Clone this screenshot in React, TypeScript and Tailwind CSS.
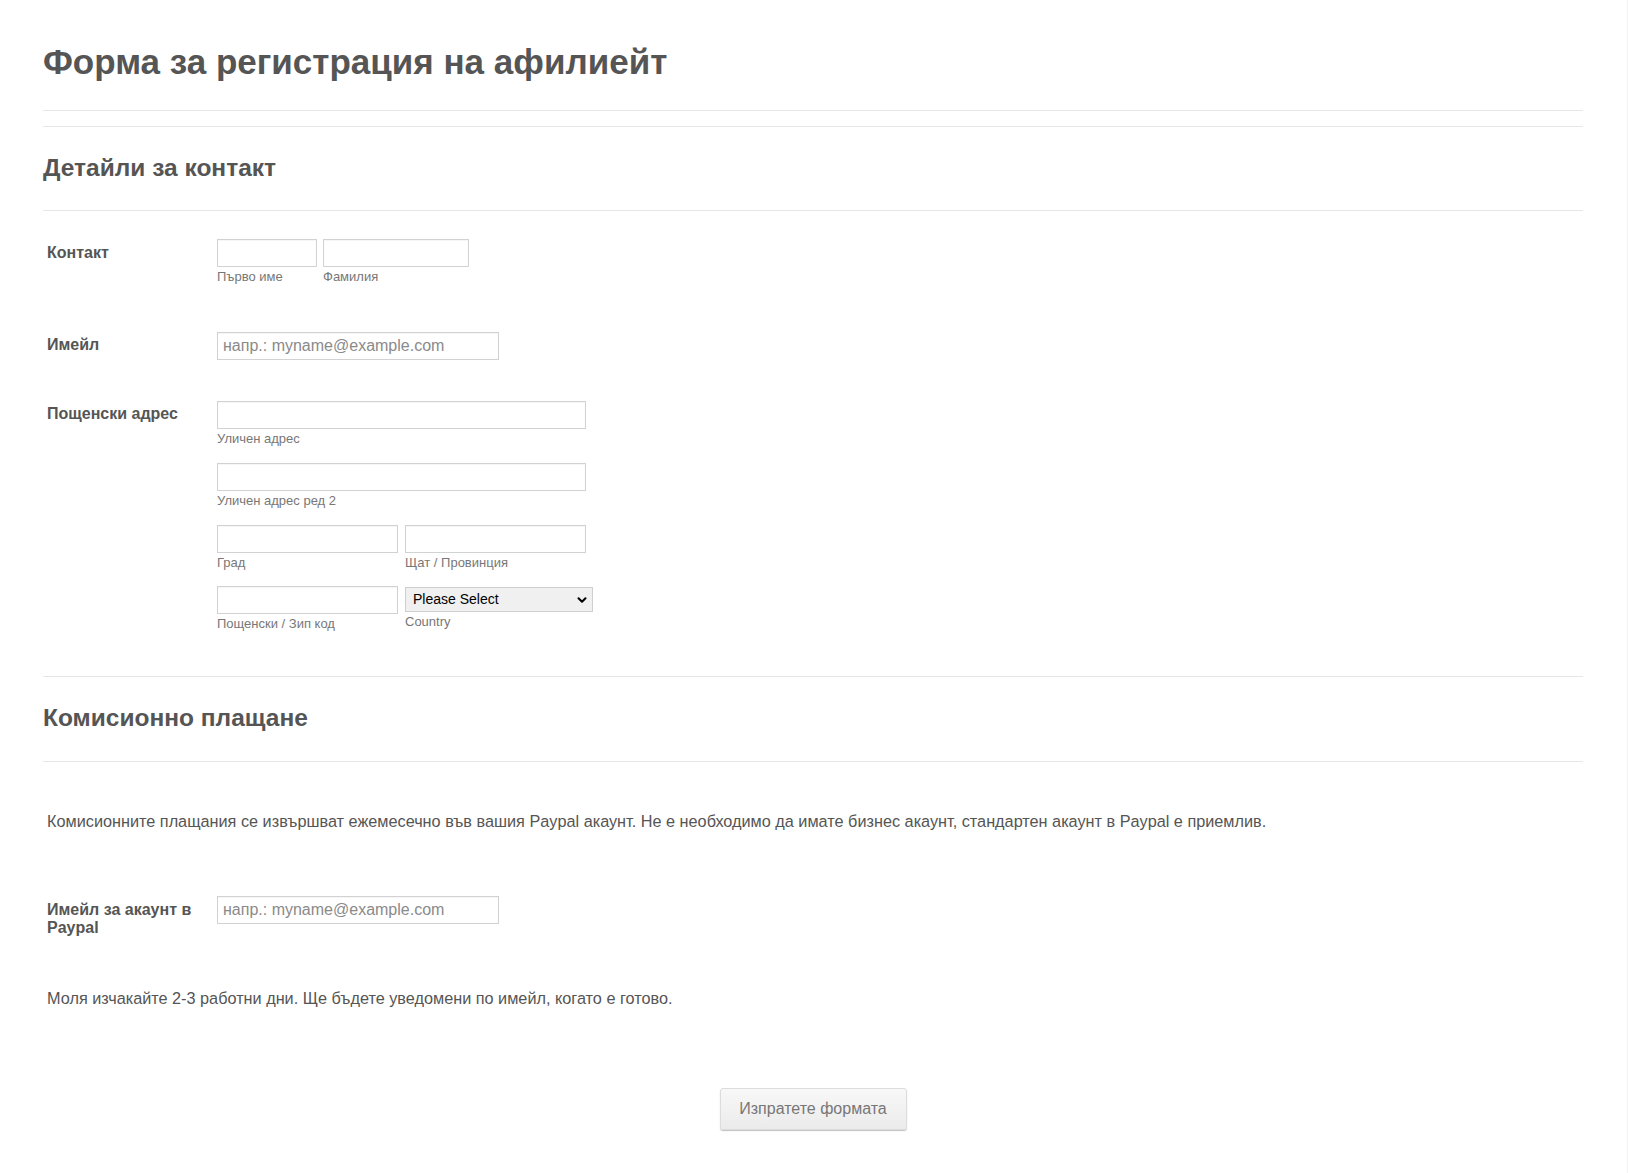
import { ChevronDown } from 'lucide-react'

const font = { fontFamily: '"Liberation Sans", Arial, sans-serif' }

function Sub({ children }: { children: React.ReactNode }) {
  return <div className="mt-[3px] text-[13px] leading-[14px] text-[#777]">{children}</div>
}

function TextBox({ width, placeholder }: { width: string; placeholder?: string }) {
  return (
    <input
      type="text"
      placeholder={placeholder}
      className={`${width} h-[28px] border border-[#d2d2d2] bg-white px-[5px] text-[16px] text-[#555] shadow-[inset_0_1px_1px_rgba(0,0,0,0.04)] outline-none placeholder:text-[#8a8a8a]`}
    />
  )
}

function Label({ children, top = 'pt-0' }: { children: React.ReactNode; top?: string }) {
  return (
    <div className={`w-[174px] shrink-0 pl-[4px] pr-[6px] text-[16px] font-bold leading-[18px] text-[#555] ${top}`}>
      {children}
    </div>
  )
}

export default function App() {
  return (
    <div className="min-h-[1173px] w-full border-r border-[#f2f2f2] bg-white px-[43px] pr-[44px] pt-[42px] pb-[43px]" style={font}>
      <h1 className="text-[35px] font-bold leading-[40px] text-[#555]">Форма за регистрация на афилиейт</h1>
      <div className="mt-[28px] border-t border-[#e6e6e6]" />
      <div className="mt-[15px] border-t border-[#e6e6e6]" />

      <h2 className="mt-[26px] text-[24.5px] font-bold leading-[30px] text-[#555]">Детайли за контакт</h2>
      <div className="mt-[27px] border-t border-[#e6e6e6]" />

      {/* Контакт */}
      <div className="mt-[28px] flex">
        <Label top="pt-[5px]">Контакт</Label>
        <div className="flex gap-[6px]">
          <div>
            <TextBox width="w-[100px]" />
            <Sub>Първо име</Sub>
          </div>
          <div>
            <TextBox width="w-[146px]" />
            <Sub>Фамилия</Sub>
          </div>
        </div>
      </div>

      {/* Имейл */}
      <div className="mt-[48px] flex">
        <Label top="pt-[4px]">Имейл</Label>
        <TextBox width="w-[282px]" placeholder="напр.: myname@example.com" />
      </div>

      {/* Пощенски адрес */}
      <div className="mt-[41px] flex">
        <Label top="pt-[4px]">Пощенски адрес</Label>
        <div className="flex w-[376px] flex-col">
          <div>
            <TextBox width="w-[369px]" />
            <Sub>Уличен адрес</Sub>
          </div>
          <div className="mt-[17px]">
            <TextBox width="w-[369px]" />
            <Sub>Уличен адрес ред 2</Sub>
          </div>
          <div className="mt-[17px] flex gap-[7px]">
            <div>
              <TextBox width="w-[181px]" />
              <Sub>Град</Sub>
            </div>
            <div>
              <TextBox width="w-[181px]" />
              <Sub>Щат / Провинция</Sub>
            </div>
          </div>
          <div className="mt-[16px] flex gap-[7px]">
            <div>
              <TextBox width="w-[181px]" />
              <Sub>Пощенски / Зип код</Sub>
            </div>
            <div>
              <div className="relative mt-[1px] h-[25px] w-[188px]">
                <select className="h-full w-full appearance-none border border-[#cfcfcf] bg-[#f0f0f0] pl-[7px] text-[14px] text-black outline-none">
                  <option>Please Select</option>
                </select>
                <ChevronDown className="pointer-events-none absolute right-[4px] top-[6px] h-[14px] w-[14px] text-black" strokeWidth={3.5} />
              </div>
              <Sub>Country</Sub>
            </div>
          </div>
        </div>
      </div>

      <div className="mt-[45px] border-t border-[#e6e6e6]" />
      <h2 className="mt-[26px] text-[24.5px] font-bold leading-[30px] text-[#555]">Комисионно плащане</h2>
      <div className="mt-[28px] border-t border-[#e6e6e6]" />

      <p className="mt-[49px] pl-[4px] text-[16.25px] leading-[20px] text-[#555]">
        Комисионните плащания се извършват ежемесечно във вашия Paypal акаунт. Не е необходимо да имате бизнес акаунт, стандартен акаунт в Paypal е приемлив.
      </p>

      {/* Paypal */}
      <div className="mt-[65px] flex">
        <Label top="pt-[5px]">Имейл за акаунт в Paypal</Label>
        <TextBox width="w-[282px]" placeholder="напр.: myname@example.com" />
      </div>

      <p className="mt-[51px] pl-[4px] text-[16.25px] leading-[20px] text-[#555]">
        Моля изчакайте 2-3 работни дни. Ще бъдете уведомени по имейл, когато е готово.
      </p>

      <div className="mt-[80px] flex justify-center">
        <button className="h-[42px] w-[187px] rounded-[3px] border border-[#dcdcdc] bg-gradient-to-b from-[#f8f8f8] to-[#ebebeb] text-[16px] text-[#777] shadow-[0_1px_1px_rgba(0,0,0,0.25)]">
          Изпратете формата
        </button>
      </div>
    </div>
  )
}
